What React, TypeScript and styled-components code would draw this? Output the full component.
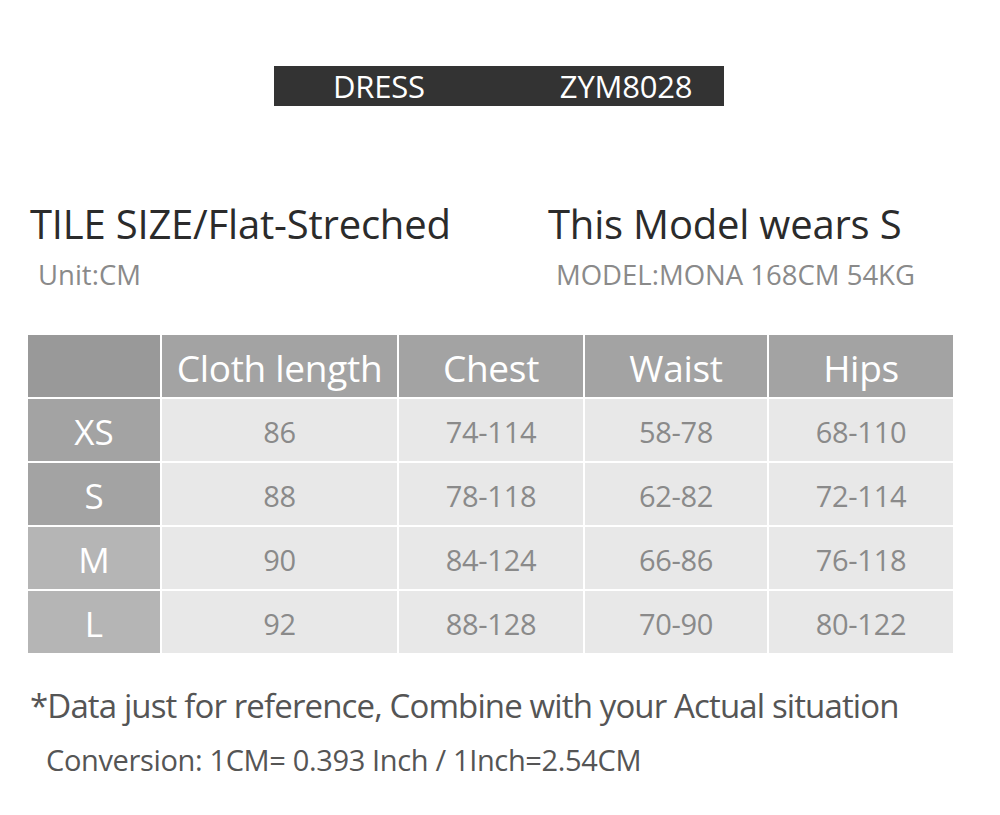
import React from "react";
import styled, { createGlobalStyle } from "styled-components";

const Global = createGlobalStyle`
  html, body { margin: 0; padding: 0; background: #fff; }
  body { font-family: "Open Sans", "Noto Sans", sans-serif; }
`;

const Page = styled.div`
  width: 1000px;
  height: 815px;
  background: #fff;
  display: flex;
  flex-direction: column;
  overflow: hidden;
`;

const TitleBar = styled.div`
  margin: 66px 0 0 274px;
  width: 450px;
  height: 40px;
  background: #333333;
  color: #fff;
  display: flex;
  align-items: center;
  padding-left: 59px;
  box-sizing: border-box;
  gap: 135px;
  font-size: 31px;
  font-weight: 400;
  letter-spacing: -0.2px;
`;

const Heads = styled.div`
  display: flex;
  margin: 94px 0 0 30px;
`;

const HeadCol = styled.div<{ $w?: number }>`
  width: ${(p) => (p.$w ? `${p.$w}px` : "auto")};
  display: flex;
  flex-direction: column;
`;

const HeadTitle = styled.div`
  font-size: 40px;
  line-height: 48px;
  color: #2b2b2b;
  letter-spacing: -0.2px;
`;

const HeadSub = styled.div`
  font-size: 27.5px;
  line-height: 34px;
  color: #8a8a8a;
  padding-left: 8px;
  margin-top: 10px;
`;

const Table = styled.div`
  margin: 43px 0 0 28px;
  width: 925px;
  display: grid;
  grid-template-columns: 132px 235px 184px 182px 184px;
  grid-auto-rows: 62px;
  gap: 2px;
  background: #fff;
`;

const HeadCell = styled.div<{ $corner?: boolean }>`
  background: ${(p) => (p.$corner ? "#999999" : "#a3a3a3")};
  color: #fff;
  font-size: 37px;
  display: flex;
  align-items: center;
  justify-content: center;
  letter-spacing: -0.3px;
  padding-top: 3px;
  box-sizing: border-box;
`;

const SizeCell = styled.div<{ $tone: string }>`
  background: ${(p) => p.$tone};
  color: #fff;
  font-size: 35px;
  display: flex;
  align-items: center;
  justify-content: center;
  padding-top: 2px;
  box-sizing: border-box;
`;

const DataCell = styled.div`
  background: #e8e8e8;
  color: #8a8a8a;
  font-size: 29px;
  display: flex;
  align-items: center;
  justify-content: center;
  letter-spacing: -0.3px;
  padding-top: 3px;
  box-sizing: border-box;
`;

const Note = styled.div`
  margin: 33px 0 0 30px;
  font-size: 33px;
  line-height: 40px;
  color: #555;
  letter-spacing: -0.87px;
`;

const Conversion = styled.div`
  margin: 16px 0 0 46px;
  font-size: 29px;
  line-height: 36px;
  color: #555;
  letter-spacing: -0.35px;
`;

const headers = ["Cloth length", "Chest", "Waist", "Hips"];
const rows: { size: string; tone: string; values: string[] }[] = [
  { size: "XS", tone: "#a3a3a3", values: ["86", "74-114", "58-78", "68-110"] },
  { size: "S", tone: "#a3a3a3", values: ["88", "78-118", "62-82", "72-114"] },
  { size: "M", tone: "#b5b5b5", values: ["90", "84-124", "66-86", "76-118"] },
  { size: "L", tone: "#b5b5b5", values: ["92", "88-128", "70-90", "80-122"] },
];

export default function App() {
  return (
    <Page>
      <Global />
      <TitleBar>
        <span>DRESS</span>
        <span>ZYM8028</span>
      </TitleBar>
      <Heads>
        <HeadCol $w={518}>
          <HeadTitle>TILE SIZE/Flat-Streched</HeadTitle>
          <HeadSub>Unit:CM</HeadSub>
        </HeadCol>
        <HeadCol>
          <HeadTitle>This Model wears S</HeadTitle>
          <HeadSub>MODEL:MONA 168CM 54KG</HeadSub>
        </HeadCol>
      </Heads>
      <Table>
        <HeadCell $corner />
        {headers.map((h) => (
          <HeadCell key={h}>{h}</HeadCell>
        ))}
        {rows.map((r) => (
          <React.Fragment key={r.size}>
            <SizeCell $tone={r.tone}>{r.size}</SizeCell>
            {r.values.map((v, i) => (
              <DataCell key={i}>{v}</DataCell>
            ))}
          </React.Fragment>
        ))}
      </Table>
      <Note>*Data just for reference, Combine with your Actual situation</Note>
      <Conversion>Conversion: 1CM= 0.393 Inch / 1Inch=2.54CM</Conversion>
    </Page>
  );
}
